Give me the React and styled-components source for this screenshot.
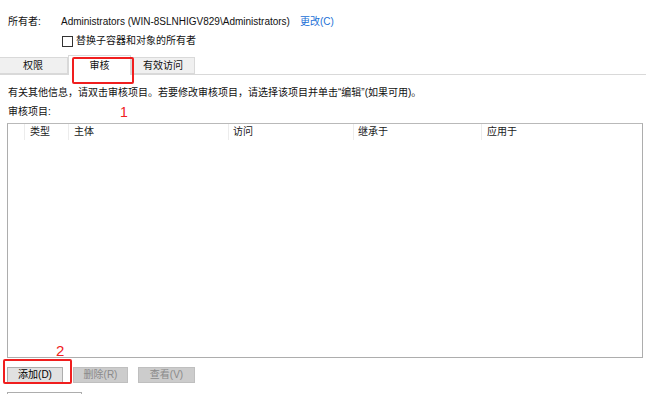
import styled, { createGlobalStyle } from 'styled-components';

const GlobalStyle = createGlobalStyle`
	body {
		margin: 0;
		background: #fff;
		font-family: "Liberation Sans", "Noto Sans CJK SC", sans-serif;
		font-size: 10px;
		color: #111;
	}
`;

const Page = styled.div`
	width: 646px;
	height: 394px;
	overflow: hidden;
	position: relative;
	display: flex;
	flex-direction: column;

	& > * {
		flex-shrink: 0;
	}
`;

const OwnerRow = styled.div`
	display: flex;
	align-items: center;
	height: 12px;
	margin-top: 16px;
	padding-left: 8px;
	line-height: 12px;
	white-space: nowrap;

	.label {
		width: 53px;
	}
	.link {
		color: #1a6fd6;
		margin-left: 10px;
	}
`;

const CheckRow = styled.label`
	display: flex;
	align-items: center;
	gap: 3px;
	margin-top: 7px;
	padding-left: 62px;
	height: 12px;
	line-height: 12px;
`;

const Box = styled.span`
	width: 11px;
	height: 11px;
	box-sizing: border-box;
	border: 1px solid #333;
	background: #fff;
`;

const TabStrip = styled.div`
	display: flex;
	align-items: flex-end;
	margin-top: 10px;
	height: 17px;
	border-bottom: 1px solid #d9d9d9;
`;

const Tab = styled.div`
	display: flex;
	align-items: center;
	justify-content: center;
	width: ${(p) => p.$w}px;
	height: ${(p) => (p.$active ? 20 : 17)}px;
	margin-bottom: ${(p) => (p.$active ? -1 : 0)}px;
	margin-left: ${(p) => p.$ml || 0}px;
	background: ${(p) => (p.$active ? '#fff' : '#f0f0f0')};
	border: 1px solid #d9d9d9;
	border-bottom: ${(p) => (p.$active ? 'none' : '1px solid #d9d9d9')};
	box-sizing: border-box;
	line-height: 12px;
	padding-top: ${(p) => (p.$active ? 1 : 0)}px;
`;

const Highlight = styled.div`
	position: absolute;
	left: ${(p) => p.$x}px;
	top: ${(p) => p.$y}px;
	width: ${(p) => p.$w}px;
	height: ${(p) => p.$h}px;
	border: 2px solid #f01e1e;
	border-radius: 2px;
	box-sizing: border-box;
	pointer-events: none;
`;

const Marker = styled.div`
	position: absolute;
	left: ${(p) => p.$x}px;
	top: ${(p) => p.$y}px;
	color: #f02020;
	font-family: "Liberation Sans", Arial, sans-serif;
	font-size: ${(p) => p.$size}px;
	line-height: ${(p) => p.$size}px;
`;

const Info = styled.div`
	padding-left: 8px;
	margin-top: 12px;
	line-height: 12px;
	height: 12px;
	white-space: nowrap;
`;

const SubLabel = styled.div`
	padding-left: 8px;
	margin-top: 7px;
	line-height: 12px;
	height: 12px;
`;

const Table = styled.div`
	margin: 5px 0 0 7px;
	width: 636px;
	height: 235px;
	border: 1px solid #adadad;
	border-top-color: #b9b9b9;
	box-sizing: border-box;
	background: #fff;
`;

const HeaderRow = styled.div`
	display: grid;
	grid-template-columns: 17px 44px 160px 125px 128px 1fr;
	height: 16px;
	line-height: 16px;
`;

const HeaderCell = styled.div`
	padding-left: ${(p) => p.$pl}px;
	border-right: ${(p) => (p.$last ? 'none' : '1px solid #ececec')};
	color: #1a1a1a;
	white-space: nowrap;
`;

const ButtonRow = styled.div`
	display: flex;
	gap: 10px;
	padding-left: 7px;
	margin-top: 9px;
`;

const Button = styled.div`
	width: ${(p) => p.$w}px;
	height: 16px;
	box-sizing: border-box;
	display: flex;
	align-items: center;
	justify-content: center;
	line-height: 12px;
	background: ${(p) => (p.$disabled ? '#cccccc' : '#e1e1e1')};
	border: 1px solid ${(p) => (p.$disabled ? '#bfbfbf' : '#adadad')};
	color: ${(p) => (p.$disabled ? '#8a8a8a' : '#000')};
`;

const Partial = styled.div`
	margin: 9px 0 0 7px;
	width: 73px;
	height: 10px;
	border: 1px solid #adadad;
	background: #fff;
`;

const columns = [
	{ label: '', pl: 0 },
	{ label: '类型', pl: 5 },
	{ label: '主体', pl: 5 },
	{ label: '访问', pl: 4 },
	{ label: '继承于', pl: 4 },
	{ label: '应用于', pl: 5 },
];

export default function App() {
	return (
		<Page>
			<GlobalStyle />
			<OwnerRow>
				<span className='label'>所有者:</span>
				<span>Administrators (WIN-8SLNHIGV829\Administrators)</span>
				<span className='link'>更改(C)</span>
			</OwnerRow>
			<CheckRow>
				<Box />
				<span>替换子容器和对象的所有者</span>
			</CheckRow>
			<TabStrip>
				<Tab $w={70} $ml={-2}>权限</Tab>
				<Tab $w={63} $active>审核</Tab>
				<Tab $w={64}>有效访问</Tab>
			</TabStrip>
			<Info>有关其他信息，请双击审核项目。若要修改审核项目，请选择该项目并单击“编辑”(如果可用)。</Info>
			<SubLabel>审核项目:</SubLabel>
			<Table>
				<HeaderRow>
					{columns.map((c, i) => (
						<HeaderCell key={i} $last={i === columns.length - 1} $pl={c.pl}>
							{c.label}
						</HeaderCell>
					))}
				</HeaderRow>
			</Table>
			<ButtonRow>
				<Button $w={56}>添加(D)</Button>
				<Button $w={55} $disabled>删除(R)</Button>
				<Button $w={57} $disabled>查看(V)</Button>
			</ButtonRow>
			<Partial />
			<Highlight $x={72} $y={57} $w={62} $h={27} />
			<Highlight $x={3} $y={359} $w={69} $h={25} />
			<Marker $x={120} $y={105} $size={14}>1</Marker>
			<Marker $x={56} $y={343} $size={15}>2</Marker>
		</Page>
	);
}
